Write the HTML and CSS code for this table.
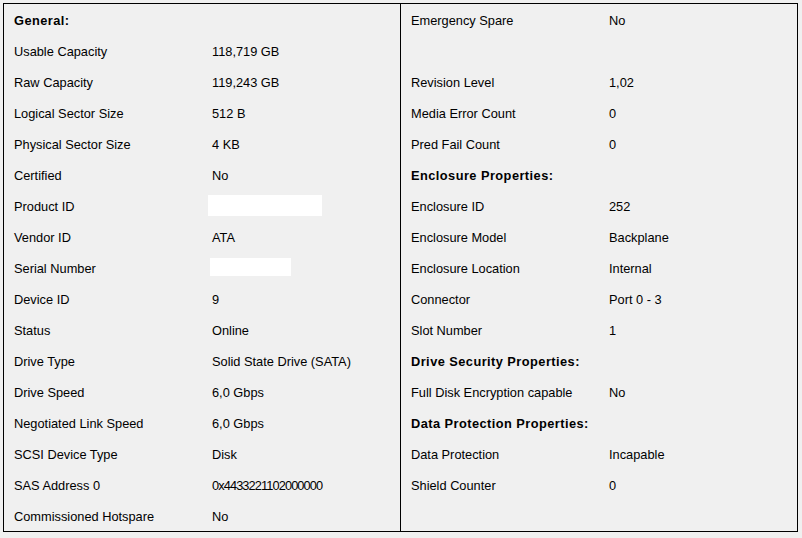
FILE: index.html
```
<!DOCTYPE html>
<html>
<head>
<meta charset="utf-8">
<link rel="stylesheet" href="styles.css">
</head>
<body>
<div class="panel">
  <div class="col">
    <div class="row head">General:</div>
    <div class="row"><span class="label">Usable Capacity</span><span class="value">118,719 GB</span></div>
    <div class="row"><span class="label">Raw Capacity</span><span class="value">119,243 GB</span></div>
    <div class="row"><span class="label">Logical Sector Size</span><span class="value">512 B</span></div>
    <div class="row"><span class="label">Physical Sector Size</span><span class="value">4 KB</span></div>
    <div class="row"><span class="label">Certified</span><span class="value">No</span></div>
    <div class="row"><span class="label">Product ID</span><span class="redact redact-product"></span></div>
    <div class="row"><span class="label">Vendor ID</span><span class="value">ATA</span></div>
    <div class="row"><span class="label">Serial Number</span><span class="redact redact-serial"></span></div>
    <div class="row"><span class="label">Device ID</span><span class="value">9</span></div>
    <div class="row"><span class="label">Status</span><span class="value">Online</span></div>
    <div class="row"><span class="label">Drive Type</span><span class="value">Solid State Drive (SATA)</span></div>
    <div class="row"><span class="label">Drive Speed</span><span class="value">6,0 Gbps</span></div>
    <div class="row"><span class="label">Negotiated Link Speed</span><span class="value">6,0 Gbps</span></div>
    <div class="row"><span class="label">SCSI Device Type</span><span class="value">Disk</span></div>
    <div class="row"><span class="label">SAS Address 0</span><span class="value narrow">0x4433221102000000</span></div>
    <div class="row"><span class="label">Commissioned Hotspare</span><span class="value">No</span></div>
  </div>
  <div class="col col-right">
    <div class="row"><span class="label">Emergency Spare</span><span class="value">No</span></div>
    <div class="row"></div>
    <div class="row"><span class="label">Revision Level</span><span class="value">1,02</span></div>
    <div class="row"><span class="label">Media Error Count</span><span class="value">0</span></div>
    <div class="row"><span class="label">Pred Fail Count</span><span class="value">0</span></div>
    <div class="row head">Enclosure Properties:</div>
    <div class="row"><span class="label">Enclosure ID</span><span class="value">252</span></div>
    <div class="row"><span class="label">Enclosure Model</span><span class="value">Backplane</span></div>
    <div class="row"><span class="label">Enclosure Location</span><span class="value">Internal</span></div>
    <div class="row"><span class="label">Connector</span><span class="value">Port 0 - 3</span></div>
    <div class="row"><span class="label">Slot Number</span><span class="value">1</span></div>
    <div class="row head">Drive Security Properties:</div>
    <div class="row"><span class="label">Full Disk Encryption capable</span><span class="value">No</span></div>
    <div class="row head">Data Protection Properties:</div>
    <div class="row"><span class="label">Data Protection</span><span class="value">Incapable</span></div>
    <div class="row"><span class="label">Shield Counter</span><span class="value">0</span></div>
  </div>
</div>
</body>
</html>
```
FILE: styles.css
```
html, body {
  margin: 0;
  padding: 0;
  background: #f0f0f0;
}
body {
  font-family: "Liberation Sans", Arial, sans-serif;
  font-size: 12.8px;
  color: #000;
}
.panel {
  box-sizing: border-box;
  margin: 3px 0 0 3px;
  width: 795px;
  height: 529px;
  border: 1px solid #000;
  display: grid;
  grid-template-columns: 396px 397px;
}
.col {
  display: flex;
  flex-direction: column;
}
.col-right {
  border-left: 1px solid #000;
}
.row {
  box-sizing: border-box;
  height: 31px;
  padding-top: 2px;
  display: flex;
  align-items: center;
  padding-left: 10px;
  white-space: nowrap;
}
.head {
  font-weight: bold;
  letter-spacing: 0.45px;
}
.label {
  width: 198px;
  flex: none;
}
.value.narrow {
  letter-spacing: -0.9px;
}
.redact {
  display: inline-block;
  background: #fff;
}
.redact-product {
  width: 114px;
  height: 21px;
  margin-left: -4px;
  margin-top: -2px;
}
.redact-serial {
  width: 81px;
  height: 18px;
  margin-left: -2px;
  margin-top: -4px;
}
```
